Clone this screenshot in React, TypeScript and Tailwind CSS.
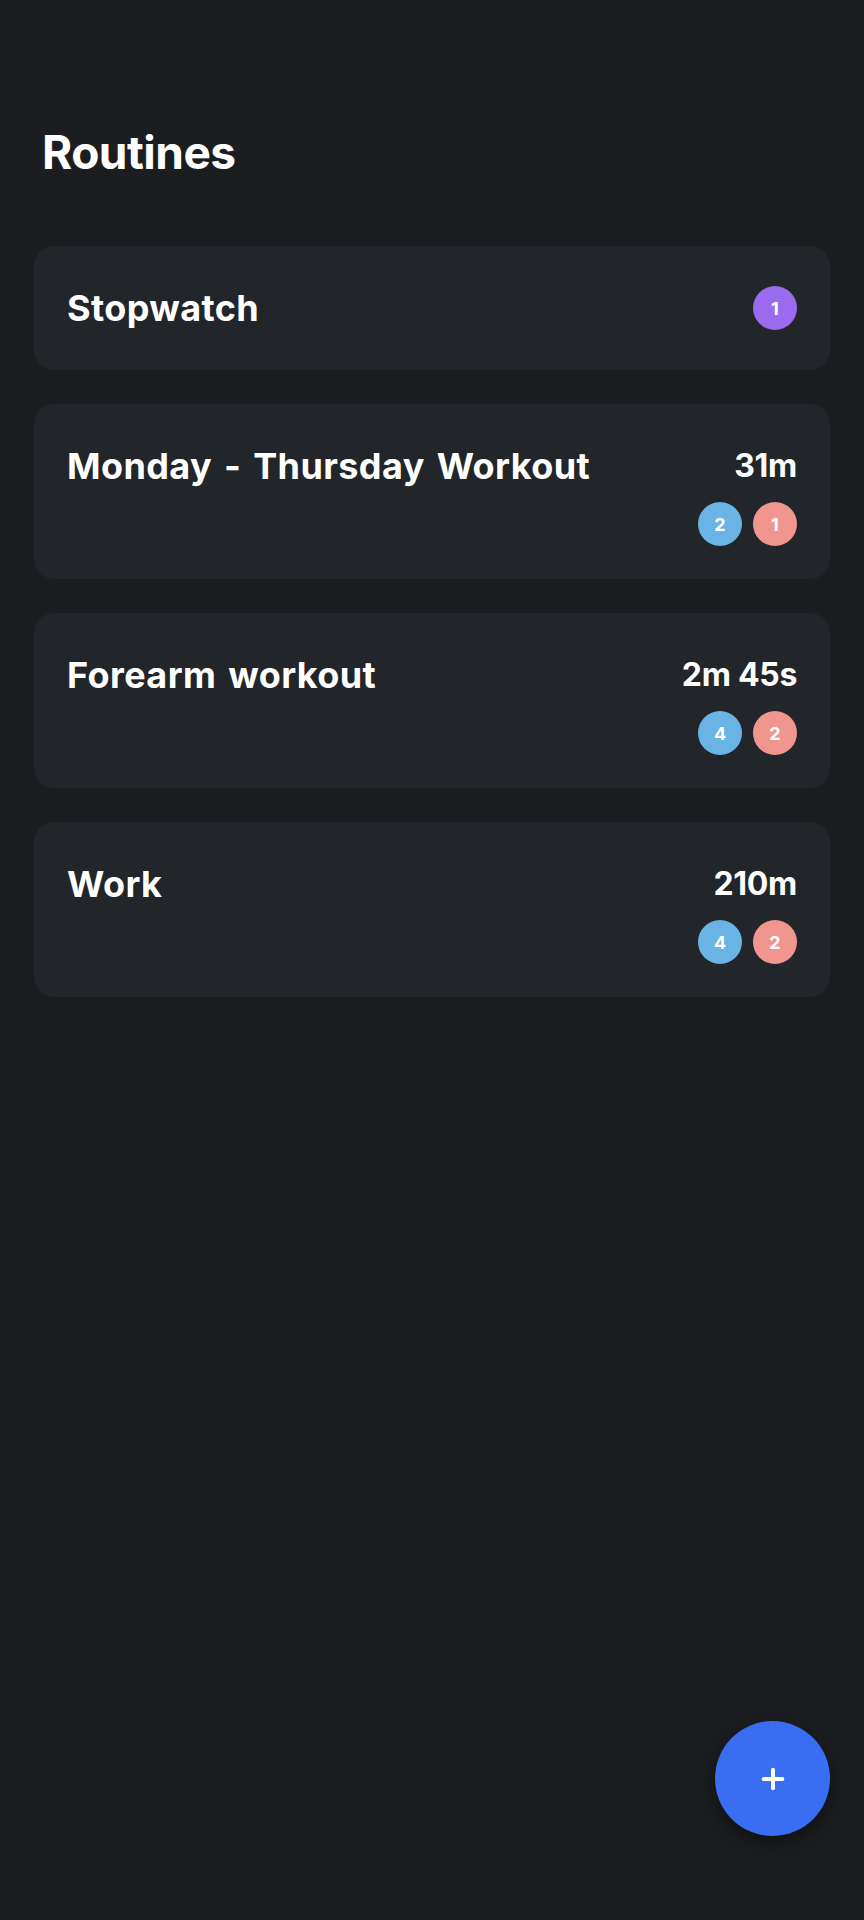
import { Plus } from 'lucide-react';

type Routine = {
  name: string;
  duration?: string;
  badges: { n: number; color: string }[];
};

const routines: Routine[] = [
  { name: 'Stopwatch', badges: [{ n: 1, color: 'bg-[#9a6bef]' }] },
  {
    name: 'Monday - Thursday Workout',
    duration: '31m',
    badges: [
      { n: 2, color: 'bg-[#69b3e5]' },
      { n: 1, color: 'bg-[#f1968e]' },
    ],
  },
  {
    name: 'Forearm workout',
    duration: '2m 45s',
    badges: [
      { n: 4, color: 'bg-[#69b3e5]' },
      { n: 2, color: 'bg-[#f1968e]' },
    ],
  },
  {
    name: 'Work',
    duration: '210m',
    badges: [
      { n: 4, color: 'bg-[#69b3e5]' },
      { n: 2, color: 'bg-[#f1968e]' },
    ],
  },
];

const Badges = ({ items }: { items: Routine['badges'] }) => (
  <div className="flex gap-[11px]">
    {items.map((b, i) => (
      <span
        key={i}
        className={`flex h-[44px] w-[44px] items-center justify-center rounded-full text-[18px] font-bold text-white ${b.color}`}
      >
        {b.n}
      </span>
    ))}
  </div>
);

const App = () => {
  return (
    <div
      className="relative min-h-[1920px] bg-[#1c1d20] px-[34px] text-white"
      style={{ fontFamily: 'Inter, "Noto Sans", sans-serif' }}
    >
      <h1 className="pt-[124px] pl-[8px] text-[46px] leading-[56px] font-bold tracking-[-0.5px]">Routines</h1>

      <div className="mt-[66px] flex flex-col gap-[34px]">
        {routines.map((r, i) =>
          r.duration ? (
            <div key={i} className="rounded-[20px] bg-[#222529] px-[33px] pt-[40px] pb-[33px]">
              <div className="flex items-center justify-between">
                <span className="text-[36px] leading-[44px] font-bold tracking-[0.4px] [word-spacing:3px]">{r.name}</span>
                <span className="text-[32px] leading-[44px] font-bold tracking-[-0.3px]">{r.duration}</span>
              </div>
              <div className="mt-[14px] flex justify-end">
                <Badges items={r.badges} />
              </div>
            </div>
          ) : (
            <div key={i} className="flex items-center justify-between rounded-[20px] bg-[#222529] px-[33px] py-[40px]">
              <span className="text-[36px] leading-[44px] font-bold tracking-[0.4px]">{r.name}</span>
              <Badges items={r.badges} />
            </div>
          )
        )}
      </div>

      <button className="absolute right-[34px] bottom-[84px] flex h-[115px] w-[115px] items-center justify-center rounded-full bg-[#3a6ef2] shadow-[0_6px_16px_rgba(0,0,0,0.45)]">
        <Plus className="h-[32px] w-[32px] text-white" strokeWidth={3} />
      </button>
    </div>
  );
};

export default App;
